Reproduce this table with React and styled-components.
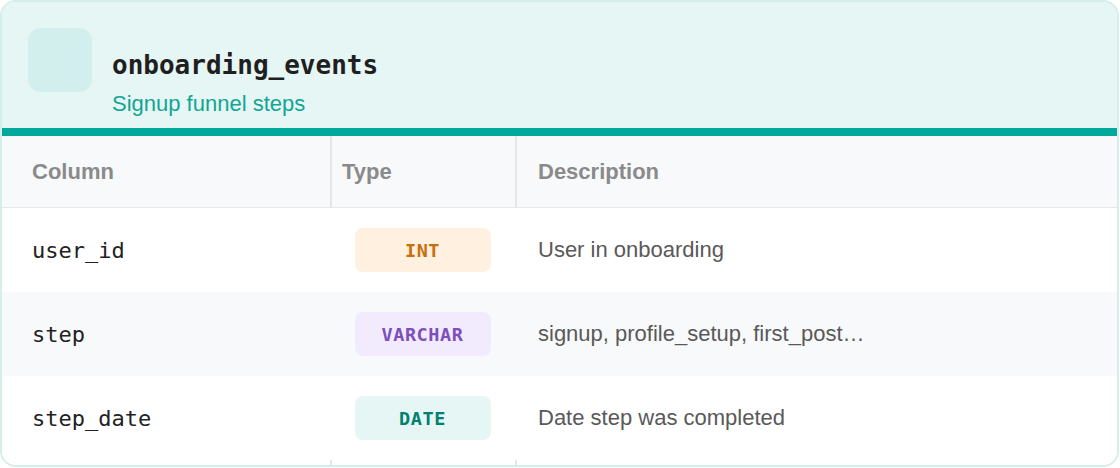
import React from 'react'
import styled, { createGlobalStyle } from 'styled-components'

const GlobalStyle = createGlobalStyle`
    html, body {
        margin: 0;
        padding: 0;
        background: #ffffff;
    }
    * {
        box-sizing: border-box;
    }
`
const Card = styled.div`
    width: 1119px;
    height: 467px;
    border: 2px solid #d4eeeb;
    border-radius: 16px;
    overflow: hidden;
    background: #ffffff;
    display: flex;
    flex-direction: column;
`
const Header = styled.div`
    height: 134px;
    padding: 26px;
    display: flex;
    gap: 20px;
    align-items: flex-start;
    background: #e6f6f4;
    border-bottom: 8px solid #00a99c;
`
const IconBox = styled.div`
    width: 64px;
    height: 64px;
    border-radius: 13px;
    background: #d2efed;
    flex-shrink: 0;
`
const TitleBlock = styled.div`
    padding-top: 22px;
    display: flex;
    flex-direction: column;
    gap: 10px;
`
const Title = styled.h1`
    margin: 0;
    font-family: "DejaVu Sans Mono", monospace;
    font-size: 26px;
    line-height: 31px;
    font-weight: bold;
    color: #1f1f1f;
`
const Subtitle = styled.div`
    font-family: "Liberation Sans", Arial, sans-serif;
    font-size: 22px;
    line-height: 26px;
    color: #12a594;
`
const Row = styled.div`
    display: grid;
    grid-template-columns: 330px 185px 1fr;
    height: ${(props) => props.head ? "72px" : props.foot ? "5px" : "84px"};
    background: ${(props) => props.striped || props.head ? "#f8f9fb" : "#ffffff"};
    border-bottom: ${(props) => props.head ? "1px solid #e5e7eb" : "none"};
`
const Cell = styled.div`
    display: flex;
    align-items: center;
    justify-content: ${(props) => props.center ? "center" : "flex-start"};
    padding-left: ${(props) => props.pad}px;
    border-right: ${(props) => props.divider ? "2px solid #e4e6ea" : "none"};
`
const HeadText = styled.span`
    font-family: "Liberation Sans", Arial, sans-serif;
    font-size: 22px;
    font-weight: bold;
    color: #8a8a8a;
`
const ColName = styled.span`
    font-family: "DejaVu Sans Mono", monospace;
    font-size: 22px;
    color: #222222;
`
const Badge = styled.span`
    width: 136px;
    height: 44px;
    margin-right: 4px;
    border-radius: 8px;
    display: flex;
    align-items: center;
    justify-content: center;
    font-family: "DejaVu Sans Mono", monospace;
    font-size: 18.5px;
    font-weight: bold;
    letter-spacing: 0.6px;
    background: ${(props) => props.bg};
    color: ${(props) => props.fg};
`
const Desc = styled.span`
    font-family: "Liberation Sans", Arial, sans-serif;
    font-size: 22px;
    color: #595959;
`

const typeColors = {
    INT: { bg: "#fff0e0", fg: "#c7700b" },
    VARCHAR: { bg: "#f2ebfd", fg: "#7d4fbc" },
    DATE: { bg: "#e6f6f4", fg: "#00806f" },
}

const columns = [
    { name: "user_id", type: "INT", desc: "User in onboarding" },
    { name: "step", type: "VARCHAR", desc: "signup, profile_setup, first_post…" },
    { name: "step_date", type: "DATE", desc: "Date step was completed" },
]

function App() {
    return (
        <>
            <GlobalStyle />
            <Card>
                <Header>
                    <IconBox />
                    <TitleBlock>
                        <Title>onboarding_events</Title>
                        <Subtitle>Signup funnel steps</Subtitle>
                    </TitleBlock>
                </Header>
                <Row head>
                    <Cell pad={30} divider><HeadText>Column</HeadText></Cell>
                    <Cell pad={10} divider><HeadText>Type</HeadText></Cell>
                    <Cell pad={21}><HeadText>Description</HeadText></Cell>
                </Row>
                {columns.map((col, i) => (
                    <Row key={col.name} striped={i % 2 === 1}>
                        <Cell pad={30}><ColName>{col.name}</ColName></Cell>
                        <Cell pad={0} center>
                            <Badge bg={typeColors[col.type].bg} fg={typeColors[col.type].fg}>{col.type}</Badge>
                        </Cell>
                        <Cell pad={21}><Desc>{col.desc}</Desc></Cell>
                    </Row>
                ))}
                <Row foot>
                    <Cell divider />
                    <Cell divider />
                    <Cell />
                </Row>
            </Card>
        </>
    )
}

export default App
